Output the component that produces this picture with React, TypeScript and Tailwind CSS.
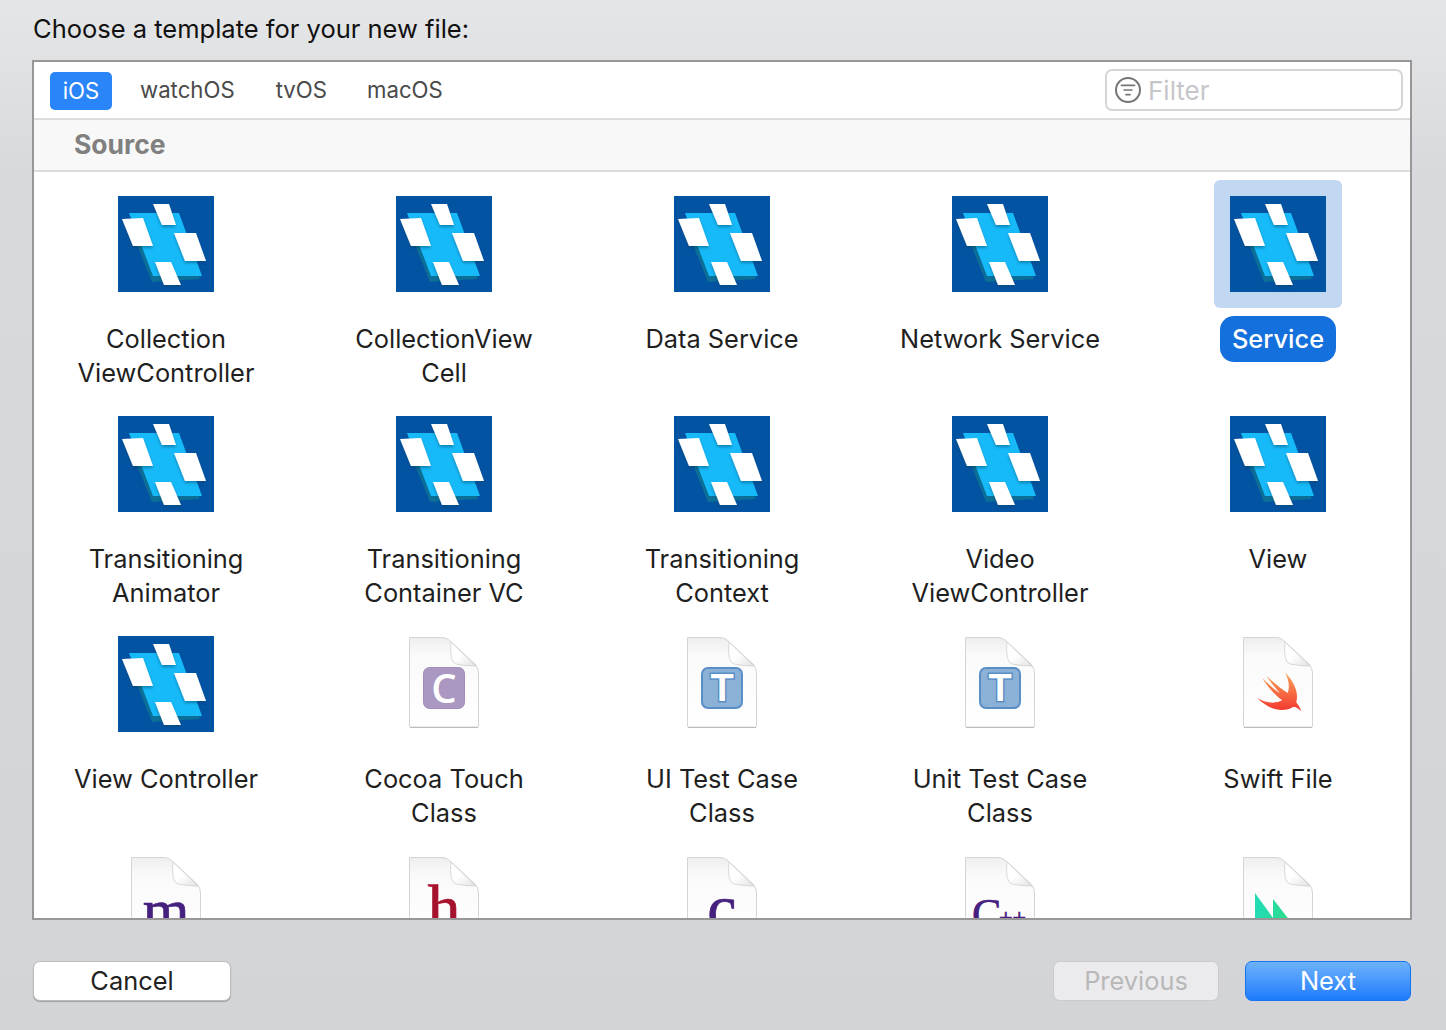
import { ReactNode } from "react";
import { ListFilter } from "lucide-react";

const SANS = "font-['Inter','Liberation_Sans',sans-serif]";

function TileIcon() {
  return (
    <svg width="96" height="96" viewBox="0 0 96 96">
      <defs>
        <filter id="tile-shadow" x="-30%" y="-30%" width="160%" height="170%">
          <feDropShadow dx="0" dy="2" stdDeviation="1.6" floodColor="#04405f" floodOpacity="0.45" />
        </filter>
      </defs>
      <rect width="96" height="96" fill="#0353a3" />
      <polygon points="19,49 34,86 82,83 70,52 30,30" fill="#0b6f97" />
      <polygon points="11,17 61,17 84,80 35,80" fill="#17baf9" />
      <g fill="#ffffff" filter="url(#tile-shadow)">
        <polygon points="35,8 51,8 58,29 44,29" />
        <polygon points="4,23 25,22 35,50 15,50" />
        <polygon points="56,37 78,37 88,65 67,65" />
        <polygon points="37,66 53,66 63,89 46,89" />
      </g>
    </svg>
  );
}

function FileIcon({ children }: { children?: ReactNode }) {
  return (
    <svg width="96" height="96" viewBox="0 0 96 96" className="overflow-visible">
      <defs>
        <linearGradient id="page-fill" x1="0" y1="0" x2="0" y2="1">
          <stop offset="0" stopColor="#eeeeee" />
          <stop offset="0.2" stopColor="#fafafa" />
          <stop offset="1" stopColor="#ffffff" />
        </linearGradient>
        <linearGradient id="fold-fill" x1="0" y1="0" x2="1" y2="1">
          <stop offset="0.45" stopColor="#ffffff" />
          <stop offset="1" stopColor="#e2e2e2" />
        </linearGradient>
        <linearGradient id="swift-fill" x1="0" y1="0" x2="0" y2="1">
          <stop offset="0" stopColor="#f8a65a" />
          <stop offset="1" stopColor="#f5372f" />
        </linearGradient>
        <linearGradient id="green-fill" x1="0" y1="0" x2="1" y2="0">
          <stop offset="0" stopColor="#22dcb6" />
          <stop offset="1" stopColor="#2ddc88" />
        </linearGradient>
      </defs>
      <path
        d="M13.5 1.5 H46 Q50 1.5 53 4 L79 28 Q82.5 32 82.5 37 V90.5 Q82.5 91 82 91 H14 Q13.5 91 13.5 90.5 Z"
        fill="url(#page-fill)"
        stroke="#d4d4d4"
        strokeWidth="1"
      />
      <path d="M14 91.5 H82" stroke="#bdbdbd" strokeWidth="1" />
      <path d="M55 6 Q53 26 60 28 Q70 30 80 30 Z" fill="url(#fold-fill)" stroke="#cccccc" strokeWidth="0.75" />
      {children}
    </svg>
  );
}

function ClassBadge() {
  return (
    <>
      <rect x="27.5" y="31.5" width="41" height="41" rx="6" fill="#ab98c2" stroke="#a28eba" />
      <text x="48" y="67" textAnchor="middle" fontSize="40" fontWeight="600" fill="#ffffff" fontFamily="'Open Sans',sans-serif">
        C
      </text>
    </>
  );
}

function TestBadge() {
  return (
    <>
      <rect x="28" y="32" width="40" height="40" rx="6" fill="#8cb1d6" stroke="#5a8ec6" strokeWidth="2" />
      <text
        x="48"
        y="65"
        textAnchor="middle"
        fontSize="38"
        fontWeight="700"
        fill="#ffffff"
        stroke="#5a8ec6"
        strokeWidth="3"
        paintOrder="stroke"
        fontFamily="'Liberation Sans',sans-serif"
      >
        T
      </text>
    </>
  );
}

function SwiftBird() {
  return (
    <g transform="translate(0.5,-6.3) scale(0.3333)">
      <path
        d="M163 128 C195 160 205 195 197 217 C203 226 210 235 212 245 C203 235 195 230 188 232 C165 245 125 250 80 205 C110 222 135 222 155 212 C135 198 110 170 95 145 C115 165 135 182 148 190 C135 175 118 155 108 138 C130 160 155 180 172 190 C178 170 175 150 163 128 Z"
        fill="url(#swift-fill)"
      />
    </g>
  );
}

function SerifGlyph({ glyph, color, size = 60, x = 48, y = 74, anchor = "middle" }: { glyph: string; color: string; size?: number; x?: number; y?: number; anchor?: "middle" | "start" }) {
  return (
    <text x={x} y={y} textAnchor={anchor} fontSize={size} fill={color} stroke={color} strokeWidth="0.7" fontFamily="'Liberation Serif',serif">
      {glyph}
    </text>
  );
}

type Template = { label: string[]; icon: ReactNode; selected?: boolean };

const tile = <TileIcon />;

const templates: Template[] = [
  { label: ["Collection", "ViewController"], icon: tile },
  { label: ["CollectionView", "Cell"], icon: tile },
  { label: ["Data Service"], icon: tile },
  { label: ["Network Service"], icon: tile },
  { label: ["Service"], icon: tile, selected: true },
  { label: ["Transitioning", "Animator"], icon: tile },
  { label: ["Transitioning", "Container VC"], icon: tile },
  { label: ["Transitioning", "Context"], icon: tile },
  { label: ["Video", "ViewController"], icon: tile },
  { label: ["View"], icon: tile },
  { label: ["View Controller"], icon: tile },
  { label: ["Cocoa Touch", "Class"], icon: <FileIcon><ClassBadge /></FileIcon> },
  { label: ["UI Test Case", "Class"], icon: <FileIcon><TestBadge /></FileIcon> },
  { label: ["Unit Test Case", "Class"], icon: <FileIcon><TestBadge /></FileIcon> },
  { label: ["Swift File"], icon: <FileIcon><SwiftBird /></FileIcon> },
  // last row is cut off by the panel, so only the icons show
  { label: [], icon: <FileIcon><SerifGlyph glyph="m" color="#46207f" /></FileIcon> },
  { label: [], icon: <FileIcon><SerifGlyph glyph="h" color="#a6122d" size={66} /></FileIcon> },
  { label: [], icon: <FileIcon><SerifGlyph glyph="c" color="#46207f" size={66} /></FileIcon> },
  {
    label: [],
    icon: (
      <FileIcon>
        <SerifGlyph glyph="C" color="#46207f" size={44} x={20} y={73} anchor="start" />
        <SerifGlyph glyph="++" color="#46207f" size={24} x={47} y={69} anchor="start" />
      </FileIcon>
    ),
  },
  {
    label: [],
    icon: (
      <FileIcon>
        <polygon points="25,37 43,62 43,43 61,66 61,96 25,96" fill="url(#green-fill)" />
      </FileIcon>
    ),
  },
];

function TemplateItem({ item }: { item: Template }) {
  return (
    <div className="flex h-[220px] flex-col items-center">
      <div className={`flex h-[128px] w-[128px] shrink-0 items-center justify-center rounded-[6px] ${item.selected ? "bg-[#c2d8f2]" : ""}`}>
        {item.icon}
      </div>
      {item.label.length > 0 && (
        <div
          className={`mt-[8px] rounded-[14px] px-3 py-[6px] text-center text-[25.4px] leading-[34px] whitespace-nowrap ${
            item.selected ? "bg-[#1470dc] font-medium text-white" : "text-[#1f1f1f]"
          }`}
        >
          {item.label.map((line) => (
            <div key={line}>{line}</div>
          ))}
        </div>
      )}
    </div>
  );
}

export default function App() {
  return (
    <div className={`flex h-[1030px] flex-col overflow-hidden bg-gradient-to-b from-[#e5e6e7] via-[#d8d9dc] via-17% to-[#d3d4d7] ${SANS}`}>
      <h1 className="pt-[12px] pl-[33px] text-[25.5px] leading-[34px] font-normal text-[#111111]">Choose a template for your new file:</h1>

      {/* Chooser panel */}
      <div className="mt-[14px] ml-[32px] flex h-[860px] w-[1380px] flex-col overflow-hidden border-2 border-[#979797] bg-white">
        <div className="flex h-[58px] shrink-0 items-center border-b-2 border-[#dcdcdc] pr-[7px] pl-[16px]">
          <button className="mt-[2px] h-[38px] w-[62px] rounded-[5px] bg-[#2a85f8] text-[22.2px] text-white">iOS</button>
          <button className="ml-[28px] text-[22.2px] text-[#4a4a4a]">watchOS</button>
          <button className="ml-[41px] text-[22.2px] text-[#4a4a4a]">tvOS</button>
          <button className="ml-[40px] text-[22.2px] text-[#4a4a4a]">macOS</button>
          <div className="ml-auto flex h-[42px] w-[298px] items-center gap-[7px] rounded-[7px] border-2 border-[#d6d6d6] pl-[8px]">
            <span className="flex h-[26px] w-[26px] items-center justify-center rounded-full border-2 border-[#757575]">
              <ListFilter size={16} strokeWidth={2.5} className="text-[#757575]" />
            </span>
            <span className="text-[26px] text-[#c6c6ca]">Filter</span>
          </div>
        </div>

        <div className="flex h-[52px] shrink-0 items-center border-b-2 border-[#dcdcdc] bg-[#f8f8f8] pl-[40px]">
          <span className="text-[26.5px] font-bold text-[#808080]">Source</span>
        </div>

        <div className="grid grid-cols-[repeat(5,190px)] content-start justify-between px-[37px] pt-[8px]">
          {templates.map((item, i) => (
            <TemplateItem key={i} item={item} />
          ))}
        </div>
      </div>

      {/* Footer buttons */}
      <div className="mt-[41px] flex items-center pr-[35px] pl-[33px]">
        <button className="h-[40px] w-[198px] rounded-[7px] border border-[#bcbcbc] bg-white text-[25.4px] text-[#222222] shadow-[0_1px_1px_rgba(0,0,0,0.25)]">
          Cancel
        </button>
        <button className="ml-auto h-[40px] w-[166px] rounded-[7px] border border-[#cbcbcb] bg-[#ebebed] text-[25.4px] text-[#b8b8b8]">
          Previous
        </button>
        <button className="ml-[26px] h-[40px] w-[166px] rounded-[7px] border border-[#1a73ee] bg-gradient-to-b from-[#6db2fa] to-[#1a7bfc] text-[25.4px] text-white">
          Next
        </button>
      </div>
    </div>
  );
}
